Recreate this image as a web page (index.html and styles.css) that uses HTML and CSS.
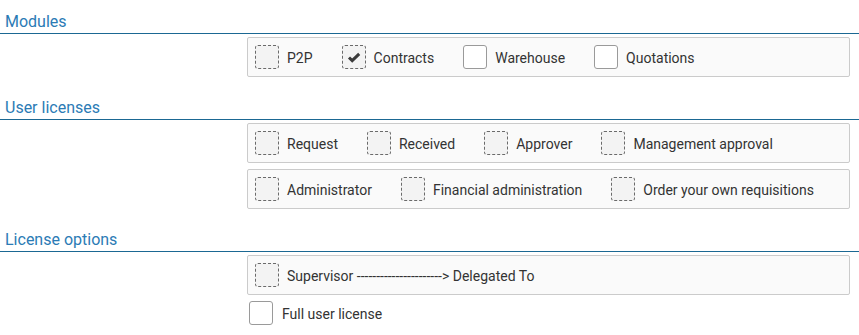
FILE: index.html
```html
<!DOCTYPE html>
<html lang="en">
<head>
    <meta charset="UTF-8">
    <title>License settings</title>
    <link rel="stylesheet" href="styles.css">
</head>
<body>
    <div class="section">
        <h2>Modules</h2>
        <div class="group">
            <label class="item"><span class="box dashed"></span><span class="text">P2P</span></label>
            <label class="item"><span class="box dashed">
                <svg width="14" height="11" viewBox="0 0 14 11"><path d="M2 5.5 L5.2 8.6 L12.2 1.8" fill="none" stroke="#3a3a3a" stroke-width="3"/></svg>
            </span><span class="text">Contracts</span></label>
            <label class="item"><span class="box"></span><span class="text">Warehouse</span></label>
            <label class="item"><span class="box"></span><span class="text">Quotations</span></label>
        </div>
    </div>

    <div class="section">
        <h2>User licenses</h2>
        <div class="group">
            <label class="item"><span class="box dashed"></span><span class="text">Request</span></label>
            <label class="item"><span class="box dashed"></span><span class="text">Received</span></label>
            <label class="item"><span class="box dashed"></span><span class="text">Approver</span></label>
            <label class="item"><span class="box dashed"></span><span class="text">Management approval</span></label>
        </div>
        <div class="group">
            <label class="item"><span class="box dashed"></span><span class="text">Administrator</span></label>
            <label class="item"><span class="box dashed"></span><span class="text">Financial administration</span></label>
            <label class="item"><span class="box dashed"></span><span class="text">Order your own requisitions</span></label>
        </div>
    </div>

    <div class="section">
        <h2>License options</h2>
        <div class="group">
            <label class="item"><span class="box dashed"></span><span class="text">Supervisor ----------------------&gt; Delegated To</span></label>
        </div>
        <label class="item single"><span class="box"></span><span class="text">Full user license</span></label>
    </div>
</body>
</html>
```

FILE: styles.css
```css
body {
    margin: 0;
    font-family: Roboto, "Liberation Sans", sans-serif;
    font-size: 14px;
    color: #333;
    background: #fff;
}
.section {
    padding-bottom: 3px;
}
h2 {
    margin: 12px 0 3px 0;
    padding: 0 0 1px 5px;
    font-size: 16px;
    font-weight: normal;
    line-height: 20px;
    color: #2b7bb5;
    border-bottom: 1px solid #1b6893;
}
.group {
    display: flex;
    align-items: center;
    margin: 0 9px 6px 247px;
    padding: 7px;
    border: 1px solid #cbcbcb;
    border-radius: 2px;
    background: #fafafa;
}
.item {
    display: flex;
    flex-shrink: 0;
    align-items: center;
    gap: 8px;
    margin-right: 29px;
    white-space: nowrap;
}
.text {
    padding-top: 2px;
    line-height: 20px;
}
.box {
    display: flex;
    flex-shrink: 0;
    align-items: center;
    justify-content: center;
    box-sizing: border-box;
    width: 24px;
    height: 24px;
    border: 1px solid #9a9a9a;
    border-radius: 3px;
    background: #fff;
}
.box.dashed {
    border: 1px dashed #6a6a6a;
    background: #f3f3f3;
}
.single {
    margin: 1px 0 0 249px;
    gap: 9px;
}
```
